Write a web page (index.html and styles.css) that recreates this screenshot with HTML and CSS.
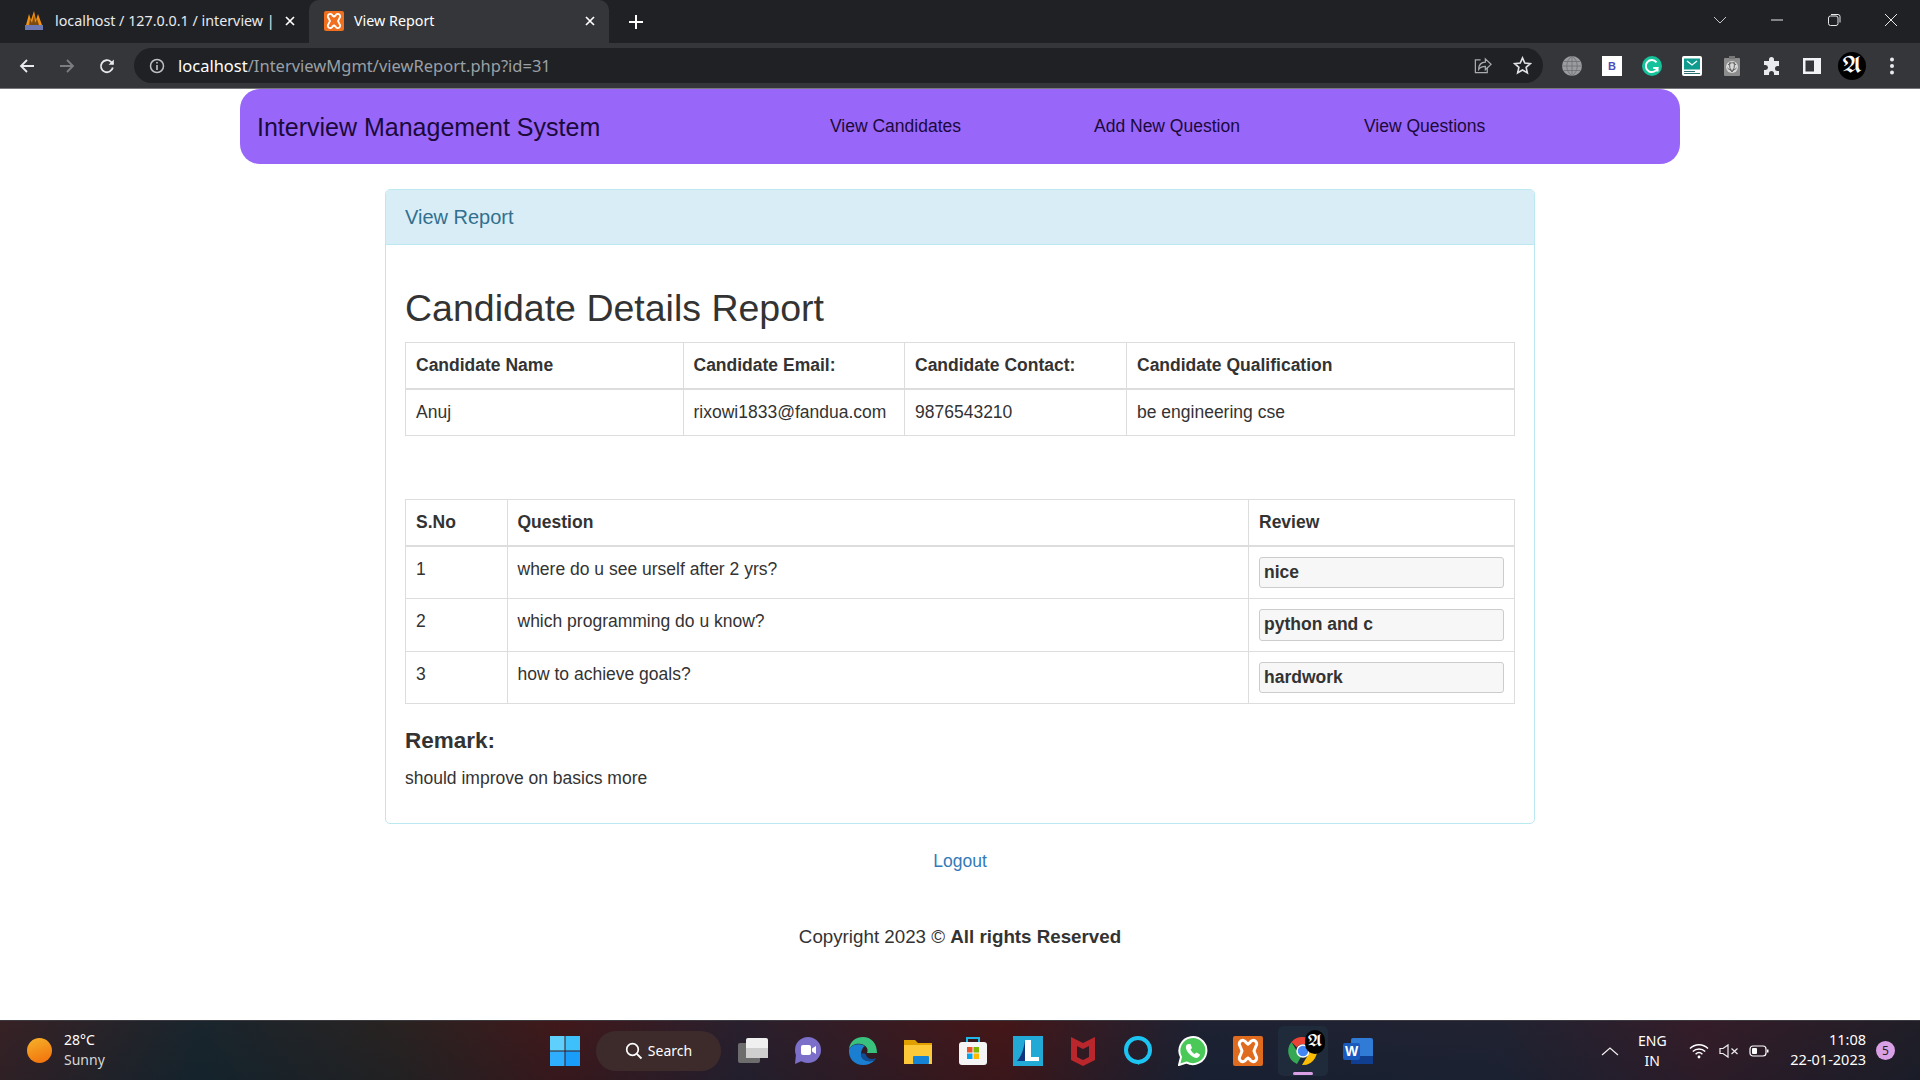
FILE: index.html
```html
<!DOCTYPE html>
<html lang="en">
<head>
<meta charset="utf-8">
<title>View Report</title>
<link rel="stylesheet" href="styles.css">
</head>
<body>
<header class="chrome">
  <div class="tabstrip">
    <div class="tab">
      <svg class="favicon" viewBox="0 0 20 20"><path d="M2 14 5 3l2 6 3-9 2 9 2-6 4 11z" fill="#f29111"/><path d="M5 14 6 8l2 4 2-8 1 8 2-4 2 6z" fill="#7a4a10"/><rect x="1" y="14" width="18" height="5" fill="#6c78af"/></svg>
      <span class="tab-title">localhost / 127.0.0.1 / interview |</span>
      <svg class="tab-close" viewBox="0 0 12 12"><path d="M2 2l8 8M10 2l-8 8" stroke="#fff" stroke-width="1.7"/></svg>
    </div>
    <div class="tab active">
      <svg class="favicon" viewBox="0 0 20 20"><rect width="20" height="20" rx="2" fill="#f0701f"/><path d="M4.500 7a2.400 2.400 0 1 1 4-2.400l1.500 1 1.500-1a2.400 2.400 0 1 1 4 2.400L14 10l1.500 3a2.400 2.400 0 1 1-4 2.400l-1.500-1-1.500 1a2.400 2.400 0 1 1-4-2.400L6 10z" fill="none" stroke="#fff" stroke-width="1.800"/></svg>
      <span class="tab-title">View Report</span>
      <svg class="tab-close" viewBox="0 0 12 12"><path d="M2 2l8 8M10 2l-8 8" stroke="#fff" stroke-width="1.7"/></svg>
    </div>
    <svg class="new-tab" viewBox="0 0 16 16"><path d="M8 1v14M1 8h14" stroke="#fff" stroke-width="2"/></svg>
    <div class="window-controls">
      <svg class="win-ctl" viewBox="0 0 14 14"><path d="M1 4l6 6 6-6" fill="none" stroke="#c8c8c8"/></svg>
      <svg class="win-ctl" viewBox="0 0 14 14"><path d="M1 7h12" stroke="#e8e8e8"/></svg>
      <svg class="win-ctl" viewBox="0 0 14 14"><rect x="1.5" y="3" width="9.500" height="9.500" rx="2" fill="none" stroke="#e8e8e8"/><path d="M4 1.500h7a2 2 0 0 1 2 2v6" fill="none" stroke="#e8e8e8"/></svg>
      <svg class="win-ctl" viewBox="0 0 14 14"><path d="M1 1l12 12M13 1L1 13" stroke="#e8e8e8"/></svg>
    </div>
  </div>
  <div class="toolbar">
    <svg class="nav-btn" viewBox="0 0 18 18"><path d="M16 9H3M9 3L3 9l6 6" fill="none" stroke="#e8eaed" stroke-width="1.800"/></svg>
    <svg class="nav-btn" viewBox="0 0 18 18"><path d="M2 9h13M9 3l6 6-6 6" fill="none" stroke="#7b7d80" stroke-width="1.800"/></svg>
    <svg class="nav-btn" viewBox="0 0 18 18"><path d="M14.800 10.500A6 6 0 1 1 13 4.800L15 7" fill="none" stroke="#e8eaed" stroke-width="1.800"/><path d="M15.800 2.500v5.200h-5.200z" fill="#e8eaed"/></svg>
    <div class="omnibox">
      <svg class="info" viewBox="0 0 16 16"><circle cx="8" cy="8" r="6.500" fill="none" stroke="#bdc1c6" stroke-width="1.500"/><path d="M8 7v5M8 4v1.600" stroke="#bdc1c6" stroke-width="1.600"/></svg>
      <span class="url"><span class="url-host">localhost</span>/InterviewMgmt/viewReport.php?id=31</span>
      <svg class="omni-icon" viewBox="0 0 20 20"><path d="M8 4H2.500v13.500H15V12" fill="none" stroke="#a8abaf" stroke-width="1.300"/><path d="M6 14c0-5 3-7.500 7-7.500V3l6 5.800-6 5.700v-3.600c-3 0-5.500 1-7 3.100z" fill="none" stroke="#a8abaf" stroke-width="1.300"/></svg>
      <svg class="omni-icon" viewBox="0 0 20 20"><path d="M10 2l2.400 5.400 5.800.6-4.400 3.900 1.300 5.800L10 14.700l-5.100 3 1.300-5.800L1.800 8l5.800-.6z" fill="none" stroke="#dfe1e5" stroke-width="1.700"/></svg>
    </div>
    <div class="extensions">
      <svg class="ext" viewBox="0 0 20 20"><circle cx="10" cy="10" r="10" fill="#9a9c9f"/><path d="M0 10h20M1.500 5.500h17M1.500 14.500h17M10 0v20M10 0c-7 5-7 15 0 20M10 0c7 5 7 15 0 20" fill="none" stroke="#6c6e71" stroke-width=".8"/></svg>
      <span class="ext ext-b">B</span>
      <svg class="ext" viewBox="0 0 20 20"><circle cx="10" cy="10" r="10" fill="#15c39a"/><path d="M14.500 6.300A6 6 0 1 0 15.500 12h-4.300M15.500 12v3.500" fill="none" stroke="#fff" stroke-width="2"/></svg>
      <svg class="ext" viewBox="0 0 20 20"><rect width="20" height="20" rx="2" fill="#fff"/><rect x="2" y="2.500" width="16" height="11" fill="#0f9b8e"/><path d="M5 5l5 4 5-4" fill="none" stroke="#fff" stroke-width="1.300"/><path d="M2 15.500h11M2 17.500h16" stroke="#2d6f73" stroke-width="1.200"/></svg>
      <svg class="ext" viewBox="0 0 20 20"><rect x="2" y="2" width="16" height="18" rx="1" fill="#8d8d8d"/><rect x="7" y="0" width="6" height="3" fill="#777"/><circle cx="10" cy="11" r="6" fill="#d8d8d8"/><path d="M6 9c3-3 6-3 8 0M5.500 12c3 3 6 3 9 0M8 6c-1 4 0 8 2 10M12 6c1 4 0 8-2 10" fill="none" stroke="#555" stroke-width=".9"/></svg>
      <svg class="ext" viewBox="0 0 20 20"><path d="M7 3.500a2.500 2.500 0 0 1 5 0V5h5v5h-1.500a2.500 2.500 0 0 0 0 5H17v4h-5v-1.500a2.500 2.500 0 0 0-5 0V19H2v-5h1.500a2.500 2.500 0 0 0 0-5H2V5h5z" fill="#e8eaed"/></svg>
      <svg class="ext" viewBox="0 0 20 20"><rect x="1" y="2" width="18" height="16" fill="#f1f3f4"/><rect x="3.500" y="4.500" width="8.500" height="11" fill="#35363a"/></svg>
      <span class="avatar">𝕬</span>
      <svg class="ext" viewBox="0 0 20 20"><circle cx="10" cy="3.500" r="2" fill="#e8eaed"/><circle cx="10" cy="10" r="2" fill="#e8eaed"/><circle cx="10" cy="16.500" r="2" fill="#e8eaed"/></svg>
    </div>
  </div>
</header>

<main class="page">
  <nav class="navbar">
    <span class="brand">Interview Management System</span>
    <a class="nav-link">View Candidates</a>
    <a class="nav-link">Add New Question</a>
    <a class="nav-link">View Questions</a>
  </nav>

  <section class="panel">
    <div class="panel-heading">View Report</div>
    <div class="panel-body">
      <h2 class="report-title">Candidate Details Report</h2>
      <table class="grid details">
        <colgroup><col class="d1"><col class="d2"><col class="d3"><col></colgroup>
        <thead>
          <tr><th>Candidate Name</th><th>Candidate Email:</th><th>Candidate Contact:</th><th>Candidate Qualification</th></tr>
        </thead>
        <tbody>
          <tr><td>Anuj</td><td>rixowi1833@fandua.com</td><td>9876543210</td><td>be engineering cse</td></tr>
        </tbody>
      </table>
      <table class="grid questions">
        <colgroup><col class="q1"><col><col class="q3"></colgroup>
        <thead>
          <tr><th>S.No</th><th>Question</th><th>Review</th></tr>
        </thead>
        <tbody>
          <tr><td>1</td><td>where do u see urself after 2 yrs?</td><td><input class="review" readonly value="nice"></td></tr>
          <tr><td>2</td><td>which programming do u know?</td><td><input class="review" readonly value="python and c"></td></tr>
          <tr><td>3</td><td>how to achieve goals?</td><td><input class="review" readonly value="hardwork"></td></tr>
        </tbody>
      </table>
      <h4 class="remark-title">Remark:</h4>
      <p class="remark">should improve on basics more</p>
    </div>
  </section>

  <a class="logout">Logout</a>
  <p class="copyright">Copyright 2023 © <b>All rights Reserved</b></p>
</main>

<footer class="taskbar">
  <div class="weather">
    <span class="sun"></span>
    <div class="weather-text"><span>28°C</span><span class="weather-sub">Sunny</span></div>
  </div>
  <div class="task-center">
    <svg class="task-icon" viewBox="0 0 30 30"><rect x="0" y="0" width="14.500" height="14.500" fill="#5fd0fb"/><rect x="15.500" y="0" width="14.500" height="14.500" fill="#3ec0fb"/><rect x="0" y="15.500" width="14.500" height="14.500" fill="#2eaefc"/><rect x="15.500" y="15.500" width="14.500" height="14.500" fill="#1a9cfb"/></svg>
    <div class="search-pill">
      <svg class="search-icon" viewBox="0 0 18 18"><circle cx="7.500" cy="7.500" r="5.800" fill="none" stroke="#fff" stroke-width="1.700"/><path d="M11.800 11.800 16.500 16.500" stroke="#fff" stroke-width="1.900"/></svg>
      <span>Search</span>
    </div>
    <svg class="task-icon" viewBox="0 0 30 30"><rect x="0" y="7" width="22" height="20" rx="2" fill="#6d6d6d"/><rect x="8" y="2" width="22" height="20" rx="2" fill="#f0f0f0"/><rect x="8" y="12" width="22" height="10" fill="#cfcfcf"/></svg>
    <svg class="task-icon" viewBox="0 0 30 30"><circle cx="15" cy="14" r="13" fill="#7b6fc9"/><path d="M3 18l-1 10 9-4z" fill="#7b6fc9"/><rect x="8" y="9" width="10" height="10" rx="2" fill="#fff"/><path d="M19 12.500l4-2.500v8l-4-2.500z" fill="#fff"/></svg>
    <svg class="task-icon" viewBox="0 0 30 30"><path d="M29 17C29 7 23 1 15 1 8 1 2 5 1 13c3-5 8-6 12-5 5 1 8 5 6 9h10z" fill="#39c27e"/><path d="M1 13c-1 9 5 16 14 16 5 0 9-2 12-5-7 3-14 0-14-6 0-4 2-7 4-8C11 7 4 8 1 13z" fill="#1a7fd1"/><path d="M13 18c0 6 7 9 14 6l1-2c-4 2-9 1-10-3-1-2-3-2-5-1z" fill="#0f4f97"/></svg>
    <svg class="task-icon" viewBox="0 0 30 30"><path d="M1 4h11l3 3h14v5H1z" fill="#e0a100"/><rect x="1" y="9" width="28" height="19" fill="#fec939"/><rect x="10" y="20" width="16" height="8" rx="1" fill="#1583d6"/></svg>
    <svg class="task-icon" viewBox="0 0 30 30"><path d="M9 7V2h12v5" fill="none" stroke="#1fb8e8" stroke-width="2"/><rect x="1" y="6" width="28" height="23" rx="3" fill="#f5f5f5"/><rect x="9" y="11" width="5.500" height="5.500" fill="#e8532b"/><rect x="15.500" y="11" width="5.500" height="5.500" fill="#7eb900"/><rect x="9" y="17.500" width="5.500" height="5.500" fill="#00a4ef"/><rect x="15.500" y="17.500" width="5.500" height="5.500" fill="#ffb900"/></svg>
    <svg class="task-icon" viewBox="0 0 30 30"><rect width="30" height="30" fill="#22a9d6"/><path d="M12 4c-1 9-4 17-8 21h8z" fill="#12357f"/><path d="M12 4h6v17h8v4H12z" fill="#fff"/></svg>
    <svg class="task-icon" viewBox="0 0 30 30"><path fill-rule="evenodd" d="M3 1l12 6 12-6v23l-12 6-12-6zM9 10v11l6 3 6-3V10l-6 3z" fill="#b9262b"/></svg>
    <svg class="task-icon" viewBox="0 0 30 30"><circle cx="15" cy="14" r="12" fill="none" stroke="#1cc4f2" stroke-width="4"/><path d="M10 25l6 4 1-4z" fill="#1cc4f2"/></svg>
    <svg class="task-icon" viewBox="0 0 30 30"><path d="M1 29l2-8a13.500 13.500 0 1 1 5.500 5.500z" fill="#4ac959" stroke="#fff" stroke-width="2"/><path d="M10 8c-2 1-3 3-1 7 2 3 5 6 9 7 2 0 4-2 4-3.500l-3.500-2-2 1.500c-2-1-3-3-4-4.500L14 12l-1.500-4z" fill="#fff"/></svg>
    <svg class="task-icon" viewBox="0 0 30 30"><rect width="30" height="30" rx="2" fill="#df6b1f"/><path d="M7 10a3.500 3.500 0 1 1 6-3.500l2 1.500 2-1.500a3.500 3.500 0 1 1 6 3.500l-2 5 2 5a3.500 3.500 0 1 1-6 3.500l-2-1.500-2 1.500a3.500 3.500 0 1 1-6-3.500l2-5z" fill="none" stroke="#fff" stroke-width="3"/></svg>
    <div class="chrome-slot">
      <svg class="task-icon" viewBox="0 0 30 30"><path d="M15 1a14 14 0 0 1 12 7H15a7 7 0 0 0-6 3.500L3.500 6A14 14 0 0 1 15 1z" fill="#ea4335"/><path d="M3.500 6l6 10a7 7 0 0 0 4 4L9 28A14 14 0 0 1 3.500 6z" fill="#34a853"/><path d="M27 8a14 14 0 0 1-13 21l6-10a7 7 0 0 0 0-11z" fill="#fbbc04"/><circle cx="15" cy="15" r="6" fill="#4285f4" stroke="#fff" stroke-width="1.500"/></svg>
      <span class="chrome-badge">𝕬</span>
      <span class="chrome-mark"></span>
    </div>
    <svg class="task-icon" viewBox="0 0 30 30"><rect x="8" y="2" width="22" height="26" rx="2" fill="#2f7bd6"/><rect x="8" y="20" width="22" height="8" fill="#103f91"/><rect x="0" y="7" width="17" height="17" rx="2" fill="#185abd"/><text x="8.500" y="20" class="word-w">W</text></svg>
  </div>
  <div class="tray">
    <svg class="tray-chev" viewBox="0 0 18 10"><path d="M1 9l8-7 8 7" fill="none" stroke="#f0f0f0" stroke-width="1.200"/></svg>
    <div class="lang"><span>ENG</span><span>IN</span></div>
    <svg class="tray-icon" viewBox="0 0 20 16"><path d="M1 5.500c5-5 13-5 18 0M3.800 8.500c3.500-3.500 9-3.500 12.400 0M6.600 11.200c2-2 4.800-2 6.800 0" fill="none" stroke="#fff" stroke-width="1.500"/><circle cx="10" cy="14" r="1.400" fill="#fff"/></svg>
    <svg class="tray-icon" viewBox="0 0 20 16"><path d="M1 5.500h3L9 2v12l-5-3.500H1z" fill="none" stroke="#eee" stroke-width="1.200"/><path d="M12.500 5.500l6 5.500M18.500 5.500l-6 5.500" stroke="#eee" stroke-width="1.200"/></svg>
    <svg class="tray-icon" viewBox="0 0 20 16"><rect x="1" y="3" width="16" height="10" rx="3" fill="none" stroke="#fff" stroke-width="1.200"/><rect x="3" y="5" width="5" height="6" rx="1" fill="#fff"/><rect x="18" y="6.500" width="1.500" height="3" fill="#fff"/></svg>
    <div class="clock"><span>11:08</span><span>22-01-2023</span></div>
    <span class="notif">5</span>
  </div>
</footer>
</body>
</html>
```

FILE: styles.css
```css
* { box-sizing: border-box; }
html, body { margin: 0; height: 100%; }
body {
  width: 1920px;
  height: 1080px;
  display: flex;
  flex-direction: column;
  overflow: hidden;
  background: #fff;
  font-family: "Liberation Sans", Arial, sans-serif;
  font-size: 17.5px;
  line-height: 25px;
  color: #333;
}

/* browser chrome */
.chrome { flex: none; height: 89px; background: #35363a; border-bottom: 1px solid #77787b; font-family: "Noto Sans", sans-serif; }
.tabstrip { height: 43px; background: #202124; display: flex; align-items: flex-end; padding-left: 12px; }
.tab { width: 297px; height: 43px; flex: none; display: flex; align-items: center; padding: 0 13px 2px 12px; color: #e8eaed; font-size: 14.3px; line-height: 20px; border-radius: 10px 10px 0 0; }
.tab.active { width: 300px; background: #35363a; color: #fff; padding-left: 15px; }
.favicon { width: 20px; height: 20px; flex: none; margin-right: 11px; }
.tab.active .favicon { margin-right: 10px; }
.tab-title { flex: 1; min-width: 0; white-space: nowrap; }
.tab-close { width: 12px; height: 12px; flex: none; margin-left: 10px; }
.new-tab { width: 16px; height: 16px; margin: 0 0 13px 19px; flex: none; }
.window-controls { margin-left: auto; align-self: flex-start; display: flex; gap: 43px; padding: 13px 22px 0 0; }
.win-ctl { width: 14px; height: 14px; display: block; }

.toolbar { height: 45px; display: flex; align-items: center; padding: 0 0 0 18px; gap: 22px; }
.nav-btn { width: 18px; height: 18px; flex: none; }
.omnibox { width: 1409px; height: 35px; margin-left: -4px; flex: none; background: #202124; border-radius: 18px; display: flex; align-items: center; padding: 0 11px 0 15px; }
.info { width: 16px; height: 16px; flex: none; margin-right: 13px; }
.url { flex: 1; color: #9aa0a6; font-size: 16.5px; white-space: nowrap; }
.url-host { color: #fff; }
.omni-icon { width: 19px; height: 19px; flex: none; margin-left: 21px; }
.extensions { display: flex; align-items: center; gap: 20px; margin-left: -3px; }
.ext { width: 20px; height: 20px; flex: none; display: block; }
.ext-b { background: #fff; color: #4b4fb8; font: bold 11px/20px "Liberation Sans", sans-serif; text-align: center; }
.avatar { width: 28px; height: 28px; margin: 0 -4px; border-radius: 50%; background: #000; color: #fff; font: 400 20px/28px "DejaVu Math TeX Gyre", "Liberation Serif", serif; text-align: center; flex: none; }

/* page */
.page { flex: 1; min-height: 0; display: flex; flex-direction: column; align-items: center; }
.navbar { width: 1440px; height: 75px; flex: none; background: #9966fa; border-radius: 20px; display: grid; grid-template-columns: 573px 264px 270px 1fr; align-items: center; padding-left: 17px; }
.brand { font-size: 25px; color: #1b0a3a; margin-top: 1px; }
.nav-link { font-size: 17.5px; color: #1b0a3a; margin-top: -1px; white-space: nowrap; }
.panel { width: 1150px; height: 635px; margin-top: 25px; flex: none; border: 1px solid #bce8f1; border-radius: 5px; }
.panel-heading { height: 55px; padding: 14px 19px; background: #d9edf7; color: #31708f; font-size: 20px; line-height: 27px; border-bottom: 1px solid #bce8f1; border-radius: 4px 4px 0 0; }
.panel-body { padding: 24px 19px 0; }
.report-title { margin: 16px 0 0; font-size: 37.5px; font-weight: 400; line-height: 46px; color: #333; }
.grid { width: 1110px; border-collapse: collapse; table-layout: fixed; border: 1px solid #ddd; }
.grid th, .grid td { border: 1px solid #ddd; padding: 10px; text-align: left; vertical-align: top; }
.grid th { border-bottom: 2px solid #ddd; }
.details { margin-top: 11px; }
.d1 { width: 277.5px; }
.d2 { width: 221.5px; }
.d3 { width: 222px; }
.questions { margin-top: 63px; }
.q1 { width: 101.5px; }
.q3 { width: 266px; }
.review { display: block; width: 245px; height: 31.25px; margin: 0; padding: 0 4px; background: #f7f7f7; border: 1px solid #ccc; border-radius: 3px; font: bold 17.5px "Liberation Sans", sans-serif; color: #333; }
.remark-title { margin: 24px 0 0; font-size: 22.5px; line-height: 25px; font-weight: 700; }
.remark { margin: 13px 0 0; }
.logout { margin-top: 25px; color: #337ab7; font-size: 17.5px; }
.copyright { margin: 50px 0 0; font-size: 18.75px; color: #333; }

/* taskbar */
.taskbar {
  flex: none;
  height: 60px;
  display: flex;
  align-items: center;
  border-top: 1px solid #3a3a40;
  color: #fff;
  font-family: "Noto Sans", sans-serif;
  background:
    linear-gradient(180deg, rgba(40,20,30,.15), rgba(10,20,35,.25)),
    linear-gradient(90deg, #3a2426 0, #17282f 200px, #2a2522 400px, #45191a 560px, #2a2230 740px, #4a1717 1000px, #1c2436 1200px, #202535 1500px, #371e2a 1700px, #1f2029 1920px);
}
.weather { width: 520px; flex: none; display: flex; align-items: center; padding-left: 27px; gap: 12px; font-size: 14px; line-height: 20px; }
.sun { width: 25px; height: 25px; border-radius: 50%; background: linear-gradient(160deg, #f5b32a, #f26d0b); }
.weather-text { display: flex; flex-direction: column; margin-top: -2px; }
.weather-sub { color: #d6d6d6; }
.task-center { display: flex; align-items: center; gap: 25px; margin-left: 30px; width: 1050px; flex: none; }
.task-icon { width: 30px; height: 30px; flex: none; display: block; }
.search-pill { width: 125px; height: 40px; margin: 0 -8px 0 -9px; border-radius: 20px; background: #3d2b2c; display: flex; align-items: center; justify-content: center; gap: 5px; font-size: 14px; }
.search-icon { width: 18px; height: 18px; }
.chrome-slot { width: 50px; height: 50px; margin: 0 -10px; border-radius: 5px; background: #1f2a3a; display: flex; align-items: center; justify-content: center; position: relative; }
.chrome-badge { position: absolute; top: 4px; right: 3px; width: 20px; height: 24px; border-radius: 10px; background: #000; color: #fff; font: 400 15px/24px "DejaVu Math TeX Gyre", "Liberation Serif", serif; text-align: center; }
.chrome-mark { position: absolute; left: 15px; bottom: 1px; width: 20px; height: 3px; border-radius: 2px; background: #d9a0e6; }
.word-w { font: bold 14px "Liberation Sans", sans-serif; fill: #fff; text-anchor: middle; }
.tray { flex: 1; display: flex; align-items: center; font-size: 14px; line-height: 20px; padding: 0 25px 0 1px; }
.tray-chev { width: 18px; height: 10px; flex: none; }
.lang { display: flex; flex-direction: column; align-items: center; margin: 0 22px 0 19px; }
.tray-icon { width: 20px; height: 16px; flex: none; margin-right: 10px; }
.clock { display: flex; flex-direction: column; align-items: flex-end; margin-left: auto; margin-top: -4px; font-size: 14.5px; }
.notif { width: 19px; height: 19px; margin-left: 10px; border-radius: 50%; background: #d9a0e6; color: #222; font-size: 12px; line-height: 19px; text-align: center; }
```
